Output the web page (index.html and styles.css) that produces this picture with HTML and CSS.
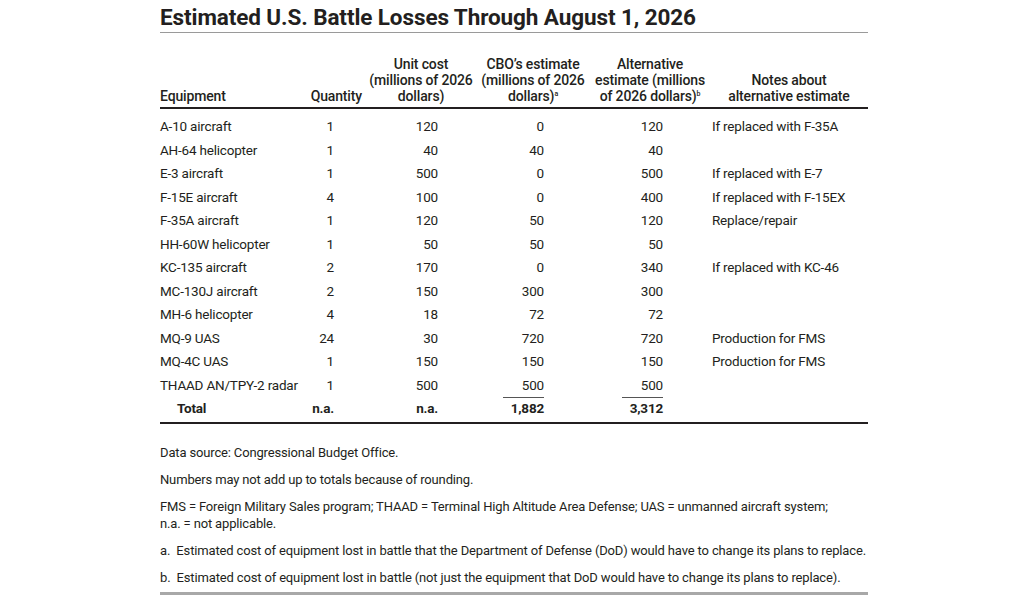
FILE: index.html
```html
<!DOCTYPE html>
<html lang="en">
<head>
  <meta charset="UTF-8">
  <meta name="viewport" content="width=device-width, initial-scale=1.0">
  <title>Estimated U.S. Battle Losses Through August 1, 2026</title>
  <link rel="stylesheet" href="styles.css">
</head>
<body>
  <div class="figure">
    <h1 class="title">Estimated U.S. Battle Losses Through August 1, 2026</h1>

    <table class="losses">
      <colgroup>
        <col class="c-equip">
        <col class="c-qty">
        <col class="c-unit">
        <col class="c-cbo">
        <col class="c-alt">
        <col class="c-notes">
      </colgroup>
      <thead>
        <tr>
          <th class="left">Equipment</th>
          <th class="qty-head">Quantity</th>
          <th>Unit cost<br>(millions of 2026<br>dollars)</th>
          <th>CBO’s estimate<br>(millions of 2026<br>dollars)<sup>a</sup></th>
          <th>Alternative<br>estimate (millions<br>of 2026 dollars)<sup>b</sup></th>
          <th>Notes about<br>alternative estimate</th>
        </tr>
      </thead>
      <tbody>
        <tr class="first"><td>A-10 aircraft</td><td class="num qty">1</td><td class="num unit">120</td><td class="num cbo">0</td><td class="num alt">120</td><td class="note">If replaced with F-35A</td></tr>
        <tr><td>AH-64 helicopter</td><td class="num qty">1</td><td class="num unit">40</td><td class="num cbo">40</td><td class="num alt">40</td><td class="note"></td></tr>
        <tr><td>E-3 aircraft</td><td class="num qty">1</td><td class="num unit">500</td><td class="num cbo">0</td><td class="num alt">500</td><td class="note">If replaced with E-7</td></tr>
        <tr><td>F-15E aircraft</td><td class="num qty">4</td><td class="num unit">100</td><td class="num cbo">0</td><td class="num alt">400</td><td class="note">If replaced with F-15EX</td></tr>
        <tr><td>F-35A aircraft</td><td class="num qty">1</td><td class="num unit">120</td><td class="num cbo">50</td><td class="num alt">120</td><td class="note">Replace/repair</td></tr>
        <tr><td>HH-60W helicopter</td><td class="num qty">1</td><td class="num unit">50</td><td class="num cbo">50</td><td class="num alt">50</td><td class="note"></td></tr>
        <tr><td>KC-135 aircraft</td><td class="num qty">2</td><td class="num unit">170</td><td class="num cbo">0</td><td class="num alt">340</td><td class="note">If replaced with KC-46</td></tr>
        <tr><td>MC-130J aircraft</td><td class="num qty">2</td><td class="num unit">150</td><td class="num cbo">300</td><td class="num alt">300</td><td class="note"></td></tr>
        <tr><td>MH-6 helicopter</td><td class="num qty">4</td><td class="num unit">18</td><td class="num cbo">72</td><td class="num alt">72</td><td class="note"></td></tr>
        <tr><td>MQ-9 UAS</td><td class="num qty">24</td><td class="num unit">30</td><td class="num cbo">720</td><td class="num alt">720</td><td class="note">Production for FMS</td></tr>
        <tr><td>MQ-4C UAS</td><td class="num qty">1</td><td class="num unit">150</td><td class="num cbo">150</td><td class="num alt">150</td><td class="note">Production for FMS</td></tr>
        <tr><td>THAAD AN/TPY-2 radar</td><td class="num qty">1</td><td class="num unit">500</td><td class="num cbo">500</td><td class="num alt">500</td><td class="note"></td></tr>
        <tr class="total">
          <td class="total-label">Total</td>
          <td class="num qty">n.a.</td>
          <td class="num unit">n.a.</td>
          <td class="num cbo"><span class="sum">1,882</span></td>
          <td class="num alt"><span class="sum">3,312</span></td>
          <td class="note"></td>
        </tr>
      </tbody>
    </table>

    <div class="notes">
      <p>Data source: Congressional Budget Office.</p>
      <p>Numbers may not add up to totals because of rounding.</p>
      <p>FMS = Foreign Military Sales program; THAAD = Terminal High Altitude Area Defense; UAS = unmanned aircraft system;<br>n.a. = not applicable.</p>
      <p>a.&nbsp; Estimated cost of equipment lost in battle that the Department of Defense (DoD) would have to change its plans to replace.</p>
      <p>b.&nbsp; Estimated cost of equipment lost in battle (not just the equipment that DoD would have to change its plans to replace).</p>
    </div>
  </div>
</body>
</html>
```

FILE: styles.css
```css
body {
  margin: 0;
  background: #fff;
  color: #231f20;
  font-family: Roboto, "Liberation Sans", sans-serif;
  font-size: 14px;
}

.figure {
  width: 708px;
  margin-left: 160px;
  padding-top: 4px;
}

.title {
  margin: 0;
  font-size: 22.5px;
  font-weight: 700;
  line-height: 26px;
  letter-spacing: -0.1px;
  padding-bottom: 2px;
  border-bottom: 1px solid #9a9a9a;
}

.losses {
  width: 100%;
  table-layout: fixed;
  border-collapse: collapse;
  margin-top: 23px;
  border-bottom: 2px solid #231f20;
}

.c-equip { width: 143px; }
.c-qty { width: 63px; }
.c-unit { width: 110px; }
.c-cbo { width: 114px; }
.c-alt { width: 120px; }
.c-notes { width: 158px; }

.losses th {
  font-weight: 500;
  line-height: 16px;
  letter-spacing: -0.15px;
  vertical-align: bottom;
  text-align: center;
  white-space: nowrap;
  padding: 0 0 3px;
  border-bottom: 2px solid #231f20;
}

.losses th.left {
  text-align: left;
}

.losses th.qty-head {
  text-align: right;
  padding-right: 4px;
}

.losses sup {
  font-size: 7px;
  line-height: 0;
  vertical-align: 5px;
}

.losses td {
  padding: 0;
  height: 23.5px;
  line-height: 23.5px;
  font-size: 13.5px;
  letter-spacing: -0.2px;
  white-space: nowrap;
}

.losses tr.first td {
  padding-top: 6px;
}

.num {
  text-align: right;
}

.qty { padding-right: 32px !important; }
.unit { padding-right: 38px !important; }
.cbo { padding-right: 46px !important; }
.alt { padding-right: 47px !important; }

.note {
  padding-left: 2px !important;
}

.total td {
  font-weight: 700;
  padding-bottom: 1px;
}

.total-label {
  padding-left: 17px !important;
}

.sum {
  display: inline-block;
  min-width: 40px;
  border-top: 1px solid #555;
  line-height: 21px;
  padding-left: 1px;
}

.notes {
  padding-top: 20px;
  padding-bottom: 6px;
  font-size: 13px;
  letter-spacing: -0.15px;
  border-bottom: 3px solid #a8a8a8;
}

.notes p {
  margin: 0 0 10px;
  line-height: 17px;
}

.notes p:last-child {
  margin-bottom: 0;
}
```
